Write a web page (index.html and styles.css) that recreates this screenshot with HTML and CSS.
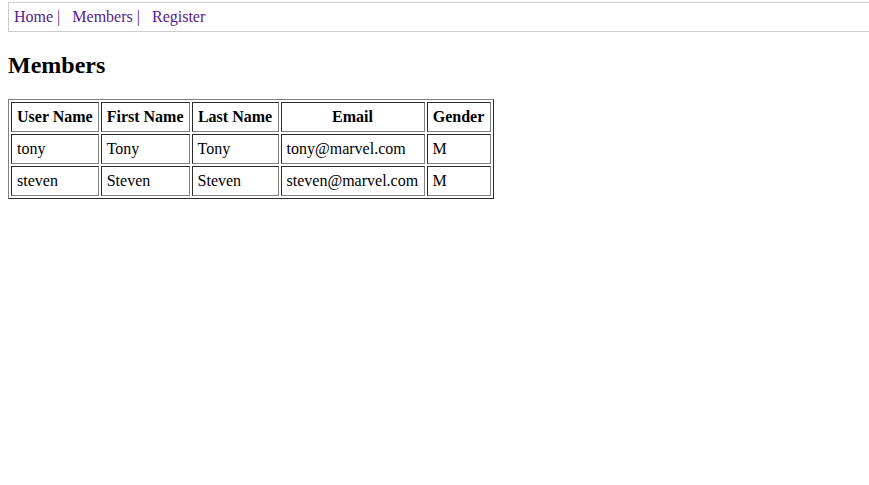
FILE: index.html
```html
<!DOCTYPE html>
<html>
<head>
<meta charset="utf-8">
<title>Members</title>
<link rel="stylesheet" href="styles.css">
</head>
<body>
<nav class="topnav">
  <a class="navlink" href="#">Home |</a>
  <a class="navlink" href="#">Members |</a>
  <a class="navlink" href="#">Register</a>
</nav>
<h2 class="title">Members</h2>
<table class="members">
  <thead>
    <tr><th>User Name</th><th>First Name</th><th class="col-last">Last Name</th><th class="col-email">Email</th><th class="col-gender">Gender</th></tr>
  </thead>
  <tbody>
    <tr><td>tony</td><td>Tony</td><td>Tony</td><td>tony@marvel.com</td><td>M</td></tr>
    <tr><td>steven</td><td>Steven</td><td>Steven</td><td>steven@marvel.com</td><td>M</td></tr>
  </tbody>
</table>
</body>
</html>
```
FILE: styles.css
```css
body {
  margin: 2px 0 8px 8px;
  font-family: "Liberation Serif", "Times New Roman", serif;
  font-size: 16px;
  color: #000;
  background: #fff;
}
.topnav {
  border: 1px solid #cccccc;
  border-right: none;
  padding: 5px;
  line-height: 18px;
}
.navlink {
  color: #551a8b;
  text-decoration: none;
  margin-right: 8px;
}
.title {
  font-size: 24px;
  font-weight: bold;
  margin: 20px 0 20px 0;
}
.members {
  border: 1px outset #808080;
  border-spacing: 2px;
}
.members th,
.members td {
  border: 1px inset #808080;
  padding: 5px;
  text-align: left;
}
.members th {
  font-weight: bold;
  text-align: center;
}
.members .col-last {
  min-width: 75px;
}
.members .col-email {
  min-width: 132px;
}
.members .col-gender {
  min-width: 52px;
}
```
